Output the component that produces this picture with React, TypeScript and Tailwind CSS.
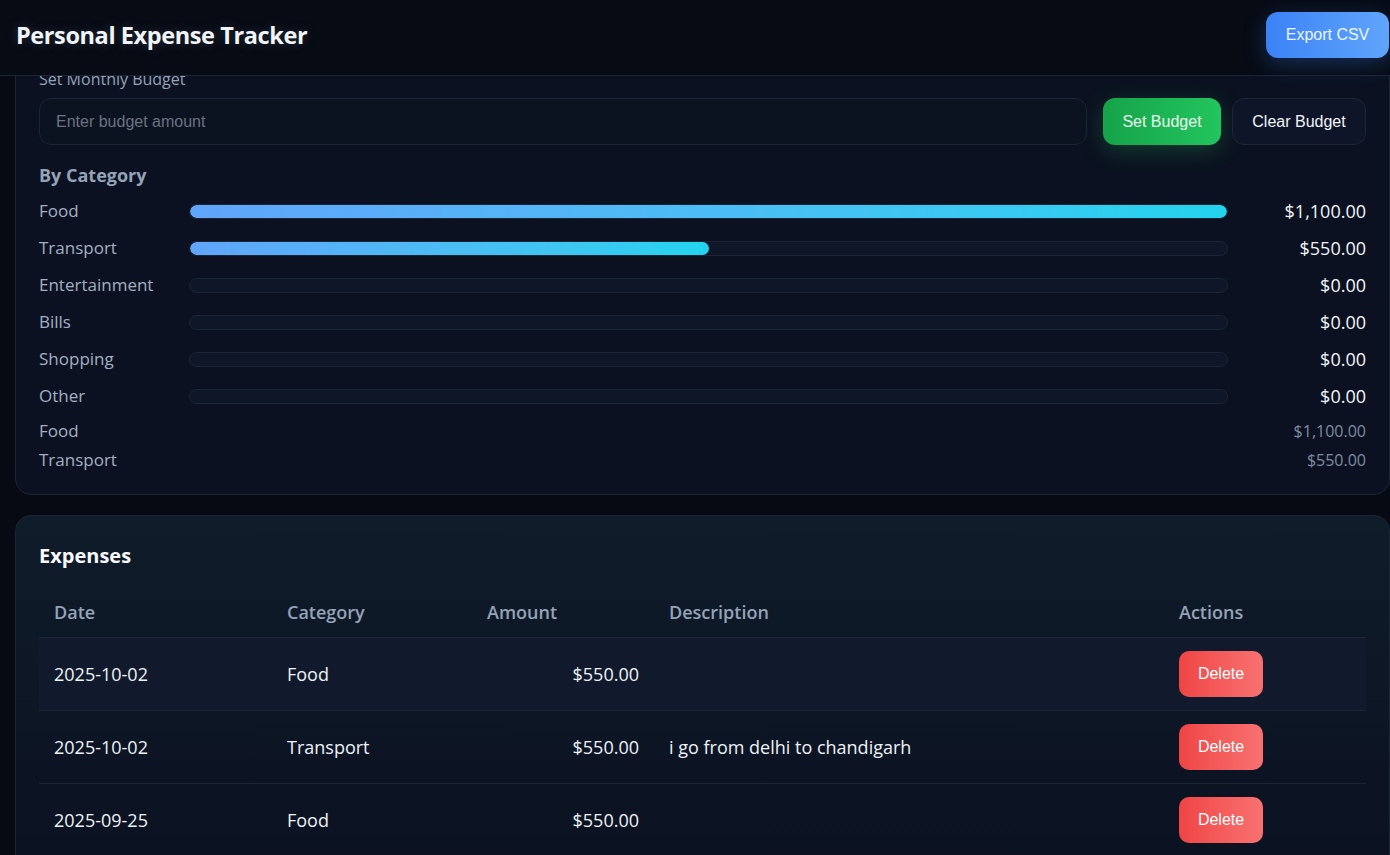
import React, { useState } from 'react';

interface Expense {
  id: number;
  date: string;
  category: string;
  amount: number;
  description: string;
}

const CATEGORIES = ['Food', 'Transport', 'Entertainment', 'Bills', 'Shopping', 'Other'];

const initialExpenses: Expense[] = [
  { id: 1, date: '2025-10-02', category: 'Food', amount: 550, description: '' },
  { id: 2, date: '2025-10-02', category: 'Transport', amount: 550, description: 'i go from delhi to chandigarh' },
  { id: 3, date: '2025-09-25', category: 'Food', amount: 550, description: '' },
];

const money = (n: number) =>
  '$' + n.toLocaleString('en-US', { minimumFractionDigits: 2, maximumFractionDigits: 2 });

const App: React.FC = () => {
  const [expenses, setExpenses] = useState<Expense[]>(initialExpenses);
  const [budget, setBudget] = useState('');

  const totals = CATEGORIES.map((c) => ({
    name: c,
    total: expenses.filter((e) => e.category === c).reduce((s, e) => s + e.amount, 0),
  }));
  const max = Math.max(...totals.map((t) => t.total), 1);

  const handleDelete = (id: number) => setExpenses(expenses.filter((e) => e.id !== id));

  return (
    <div className="min-h-screen bg-[#070a13] font-['Open_Sans',sans-serif] text-[#e2e8f0]">
      {/* sticky top bar */}
      <header className="fixed top-0 left-0 right-0 z-10 h-[76px] flex items-center justify-between pl-4 pr-px pb-[6px] bg-[#070b14] border-b border-[#1c2433]">
        <h1 className="mt-[3px] text-[23.5px] font-bold text-[#f1f5f9] tracking-[-0.4px] [text-shadow:0_0_12px_rgba(148,163,184,0.25)]">
          Personal Expense Tracker
        </h1>
        <button className="h-[46px] w-[123px] rounded-xl bg-gradient-to-r from-[#3b82f6] to-[#60a5fa] text-white/90 text-[16px] font-['Liberation_Sans',Arial,sans-serif] shadow-[0_6px_22px_rgba(59,130,246,0.3)]">
          Export CSV
        </button>
      </header>

      <main className="pl-[15px] pt-[42px] pb-8">
        <section className="rounded-2xl border border-[#1c2535] bg-[#0b1120] px-[23px] pt-6 pb-[21px]">
          <label className="block text-[16px] leading-6 text-[#94a3b8] mb-[7px]">Set Monthly Budget</label>
          <div className="flex items-center">
            <input
              value={budget}
              onChange={(e) => setBudget(e.target.value)}
              placeholder="Enter budget amount"
              className="flex-1 h-[47px] rounded-xl border border-[#1c2535] bg-[#0b1220] px-4 text-[16px] font-['Liberation_Sans',Arial,sans-serif] text-[#e2e8f0] placeholder:text-[#6b7280] outline-none"
            />
            <button className="ml-4 h-[47px] w-[118px] rounded-xl bg-gradient-to-r from-[#16a34a] to-[#22c55e] text-white/90 text-[16px] font-['Liberation_Sans',Arial,sans-serif] shadow-[0_6px_22px_rgba(34,197,94,0.25)]">
              Set Budget
            </button>
            <button className="ml-[11px] h-[47px] w-[134px] rounded-xl border border-[#1c2535] bg-[#0e1528] text-[#f1f5f9] text-[16px] font-['Liberation_Sans',Arial,sans-serif]">
              Clear Budget
            </button>
          </div>

          <h3 className="mt-4 text-[18px] leading-7 font-bold text-[#94a3b8]">By Category</h3>
          <div className="mt-2 flex flex-col gap-[9px]">
            {totals.map((t) => (
              <div key={t.name} className="grid grid-cols-[150px_1fr_138px] items-center h-[28px]">
                <span className="text-[17px] text-[#a3b0c2]">{t.name}</span>
                <div className="h-[15px] rounded-full bg-[#0e1628] border border-[#1c2535] overflow-hidden">
                  {t.total > 0 && (
                    <div
                      className="h-full rounded-full bg-gradient-to-r from-[#60a5fa] to-[#22d3ee]"
                      style={{ width: `${(t.total / max) * 100}%` }}
                    />
                  )}
                </div>
                <span className="text-right text-[18px] text-[#f1f5f9]">{money(t.total)}</span>
              </div>
            ))}
          </div>

          <div className="mt-2 flex flex-col gap-[3px]">
            {totals
              .filter((t) => t.total > 0)
              .map((t) => (
                <div key={t.name} className="flex justify-between items-center h-[26px]">
                  <span className="text-[17px] text-[#a3b0c2]">{t.name}</span>
                  <span className="text-[16px] text-[#7f8ca0]">{money(t.total)}</span>
                </div>
              ))}
          </div>
        </section>

        <section className="mt-5 rounded-2xl border border-[#1c2535] bg-gradient-to-b from-[#0f1c2a] to-[#0b1120] px-[23px] pt-[26px] pb-6">
          <h2 className="text-[20px] leading-7 font-bold text-[#f8fafc]">Expenses</h2>
          <table className="mt-[17px] w-full table-fixed border-collapse">
            <colgroup>
              <col className="w-[233px]" />
              <col className="w-[200px]" />
              <col className="w-[182px]" />
              <col />
              <col className="w-[202px]" />
            </colgroup>
            <thead>
              <tr className="border-b border-[#1c2535] text-left text-[18px] text-[#94a3b8]">
                <th className="px-[15px] pt-3 pb-[11px] font-semibold">Date</th>
                <th className="px-[15px] pt-3 pb-[11px] font-semibold">Category</th>
                <th className="px-[15px] pt-3 pb-[11px] font-semibold">Amount</th>
                <th className="px-[15px] pt-3 pb-[11px] font-semibold">Description</th>
                <th className="px-[15px] pt-3 pb-[11px] font-semibold">Actions</th>
              </tr>
            </thead>
            <tbody>
              {expenses.map((e, i) => (
                <tr
                  key={e.id}
                  className={`border-b border-[#1c2535] text-[18px] text-[#eef2f7] ${i === 0 ? 'bg-[#101a2c]' : ''}`}
                >
                  <td className="px-[15px] py-[13px]">{e.date}</td>
                  <td className="px-[15px] py-[13px]">{e.category}</td>
                  <td className="px-[15px] py-[13px] text-right">{money(e.amount)}</td>
                  <td className="px-[15px] py-[13px]">{e.description}</td>
                  <td className="px-[15px] py-[13px]">
                    <button
                      onClick={() => handleDelete(e.id)}
                      className="h-[46px] w-[84px] rounded-[10px] bg-gradient-to-r from-[#ef4444] to-[#f87171] text-white text-[16px] font-['Liberation_Sans',Arial,sans-serif]"
                    >
                      Delete
                    </button>
                  </td>
                </tr>
              ))}
            </tbody>
          </table>
        </section>
      </main>
    </div>
  );
};

export default App;
